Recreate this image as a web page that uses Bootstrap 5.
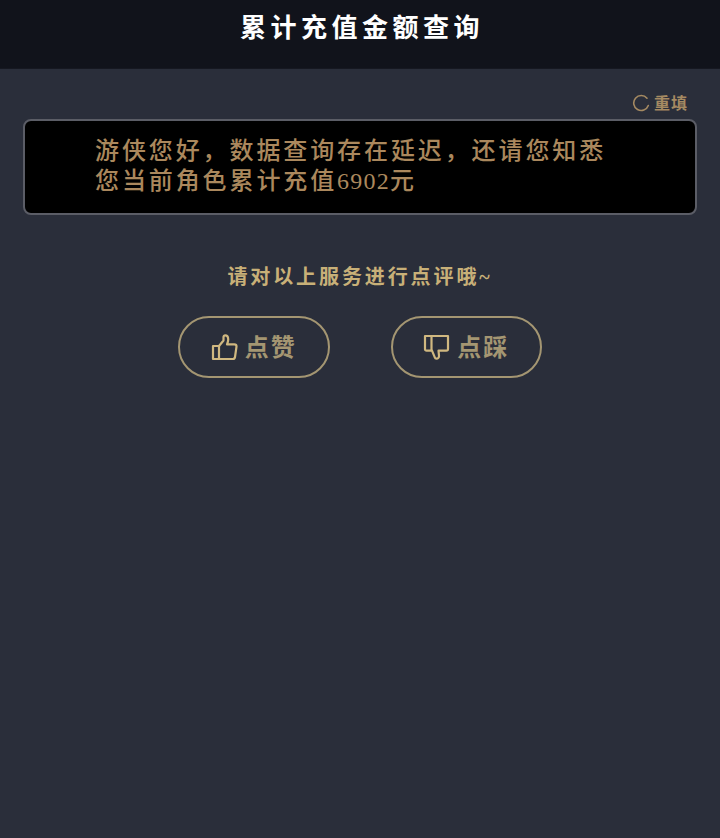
<!DOCTYPE html>
<html lang="zh">
<head>
<meta charset="utf-8">
<title>累计充值金额查询</title>
<link href="https://cdn.jsdelivr.net/npm/bootstrap@5.3.0/dist/css/bootstrap.min.css" rel="stylesheet">
<style>
html, body { height: 100%; }
body { background: #2a2e3a; font-family: "Liberation Serif", "Noto Sans CJK SC", sans-serif; }
.top-bar { height: 69px; background: #11131b; border-bottom: 1px solid #161821; padding-top: 9px; }
.top-title { color: #fff; font-size: 26px; font-weight: 700; letter-spacing: 4.5px; line-height: 40px; margin: 0; padding-left: 4px; }
.reset-row { height: 50px; padding: 25px 32px 0 0; color: #a58a62; font-size: 16px; font-weight: 700; letter-spacing: 1px; line-height: 20px; }
.reset-row svg { width: 18px; height: 18px; margin: 0 4px 0 0; }
.notice-box { height: 96px; margin: 0 23px; background: #000; border: 2px solid #5b5d66; border-radius: 8px; padding: 15px 0 0 70px; color: #ab885d; font-size: 24px; font-weight: 500; letter-spacing: 2.9px; line-height: 30px; white-space: nowrap; }
.notice-box p { margin: 0; }
.notice-num { letter-spacing: 1.2px; }
.rate-prompt { color: #c8b078; font-size: 20px; font-weight: 700; letter-spacing: 2.9px; line-height: 28px; margin-top: 48px; }
.rate-row { gap: 61px; margin-top: 25px; }
.rate-btn { width: 151.5px; height: 62px; border: 2px solid #a49672; border-radius: 31px; background: transparent; color: #a49672; font-size: 24px; font-weight: 700; letter-spacing: 2px; line-height: 1; padding: 0; gap: 7px; }
.rate-btn span { padding-top: 2px; }
.rate-btn svg { width: 27px; height: 27px; }
</style>
</head>
<body>
<header class="top-bar text-center">
  <h1 class="top-title">累计充值金额查询</h1>
</header>
<div class="reset-row d-flex justify-content-end align-items-start">
  <svg viewBox="0 0 18 18" fill="none" stroke="#a58a62" stroke-width="1.6" stroke-linecap="round"><path d="M15 4.200A7.500 7.500 0 1 0 16.300 11.500"/></svg>
  <span>重填</span>
</div>
<div class="notice-box">
  <p>游侠您好，数据查询存在延迟，还请您知悉</p>
  <p>您当前角色累计充值<span class="notice-num">6902</span>元</p>
</div>
<p class="rate-prompt text-center mb-0">请对以上服务进行点评哦~</p>
<div class="rate-row d-flex justify-content-center">
  <button type="button" class="rate-btn d-flex align-items-center justify-content-center">
    <svg viewBox="0 0 27 27" fill="none" stroke="#d0b880" stroke-width="2.2" stroke-linejoin="round"><path d="M2 12h6v13H2z"/><path d="M8 12l4.500-5.500V3c0-1 .7-1.600 1.700-1.600 2 0 3 2 3 4 0 2-.7 3.600-1.200 5h7.300c1.400 0 2.200 1 2.200 2.200L24 23c-.2 1.200-1 2-2.200 2H8"/></svg>
    <span>点赞</span>
  </button>
  <button type="button" class="rate-btn d-flex align-items-center justify-content-center">
    <svg viewBox="0 0 27 27" fill="none" stroke="#d0b880" stroke-width="2.2" stroke-linejoin="round"><path d="M2 2h23v13c0 1-.7 1.700-1.700 1.700H15.500l.5 5c.2 1.800-1 3-2.500 3-1 0-1.500-.5-1.800-1.500L9 16.700H3.500C2.700 16.700 2 16 2 15.200z"/><path d="M8.500 2v14.700"/></svg>
    <span>点踩</span>
  </button>
</div>
<script src="https://cdn.jsdelivr.net/npm/bootstrap@5.3.0/dist/js/bootstrap.bundle.min.js"></script>
</body>
</html>
